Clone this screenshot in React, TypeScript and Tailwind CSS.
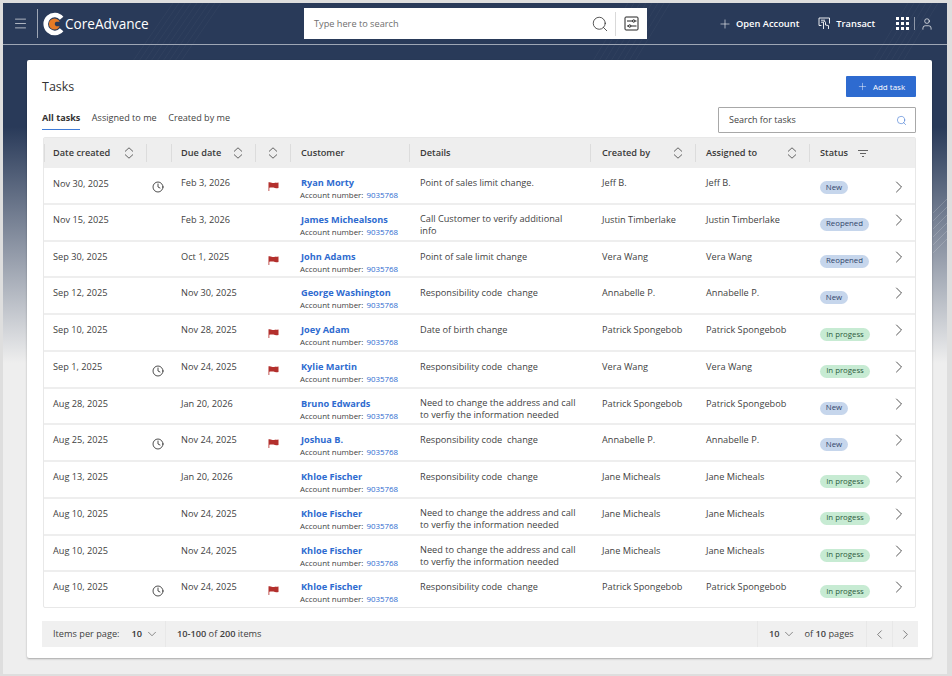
import React from 'react';
import { ChevronDown, ChevronLeft, ChevronRight, Clock, Menu, Plus, Search, User } from 'lucide-react';

type Task = {
  created: string;
  clock?: boolean;
  due: string;
  flag?: boolean;
  customer: string;
  details: string;
  by: string;
  to: string;
  status: 'New' | 'Reopened' | 'In progess';
};

const tasks: Task[] = [
  { created: 'Nov 30, 2025', clock: true, due: 'Feb 3, 2026', flag: true, customer: 'Ryan Morty', details: 'Point of sales limit change.', by: 'Jeff B.', to: 'Jeff B.', status: 'New' },
  { created: 'Nov 15, 2025', due: 'Feb 3, 2026', customer: 'James Michealsons', details: 'Call Customer to verify additional info', by: 'Justin Timberlake', to: 'Justin Timberlake', status: 'Reopened' },
  { created: 'Sep 30, 2025', due: 'Oct 1, 2025', flag: true, customer: 'John Adams', details: 'Point of sale limit change', by: 'Vera Wang', to: 'Vera Wang', status: 'Reopened' },
  { created: 'Sep 12, 2025', due: 'Nov 30, 2025', customer: 'George Washington', details: 'Responsibility code  change', by: 'Annabelle P.', to: 'Annabelle P.', status: 'New' },
  { created: 'Sep 10, 2025', due: 'Nov 28, 2025', flag: true, customer: 'Joey Adam', details: 'Date of birth change', by: 'Patrick Spongebob', to: 'Patrick Spongebob', status: 'In progess' },
  { created: 'Sep 1, 2025', clock: true, due: 'Nov 24, 2025', flag: true, customer: 'Kylie Martin', details: 'Responsibility code  change', by: 'Vera Wang', to: 'Vera Wang', status: 'In progess' },
  { created: 'Aug 28, 2025', due: 'Jan 20, 2026', customer: 'Bruno Edwards', details: 'Need to change the address and call to verfiy the information needed', by: 'Patrick Spongebob', to: 'Patrick Spongebob', status: 'New' },
  { created: 'Aug 25, 2025', clock: true, due: 'Nov 24, 2025', flag: true, customer: 'Joshua B.', details: 'Responsibility code  change', by: 'Annabelle P.', to: 'Annabelle P.', status: 'New' },
  { created: 'Aug 13, 2025', due: 'Jan 20, 2026', customer: 'Khloe Fischer', details: 'Responsibility code  change', by: 'Jane Micheals', to: 'Jane Micheals', status: 'In progess' },
  { created: 'Aug 10, 2025', due: 'Nov 24, 2025', customer: 'Khloe Fischer', details: 'Need to change the address and call to verfiy the information needed', by: 'Jane Micheals', to: 'Jane Micheals', status: 'In progess' },
  { created: 'Aug 10, 2025', due: 'Nov 24, 2025', customer: 'Khloe Fischer', details: 'Need to change the address and call to verfiy the information needed', by: 'Jane Micheals', to: 'Jane Micheals', status: 'In progess' },
  { created: 'Aug 10, 2025', clock: true, due: 'Nov 24, 2025', flag: true, customer: 'Khloe Fischer', details: 'Responsibility code  change', by: 'Patrick Spongebob', to: 'Patrick Spongebob', status: 'In progess' },
];

const columns = 'grid grid-cols-[102px_25px_84px_35px_119px_181px_105px_114px_1fr]';

const Logo = () => (
  <svg width="22" height="24" viewBox="0 0 22 24" className="shrink-0">
    <path d="M18.6 6.2A9 9 0 1 0 18.6 17.8" fill="none" stroke="#ffffff" strokeWidth="4.6" />
    <circle cx="11.5" cy="12" r="5.6" fill="#e57b26" />
    <path d="M17.5 9.8H13.2A2.4 2.4 0 0 0 13.2 14.2H17.5Z" fill="#293a59" />
  </svg>
);

const SortIcon = () => (
  <svg width="10" height="12" viewBox="0 0 10 12" fill="none" stroke="#3f3f3f" strokeWidth="0.8" className="shrink-0">
    <path d="M1 4.5 5 .8 9 4.5M1 7.5 5 11.2 9 7.5" />
  </svg>
);

const Flag = () => (
  <svg width="11" height="9" viewBox="0 0 11 9">
    <path d="M0.5 0.3 C3 -0.3 4 1.2 6 1 C7.5 0.9 8.5 0.9 10.5 0.6 L10.5 6 C8 6.6 7 6.2 5.5 5.6 C4 5.2 2.5 5.4 1.3 5.8 L1.3 9 L0.5 9 Z" fill="#b3302d" />
  </svg>
);

const SlidersIcon = () => (
  <svg width="15" height="15" viewBox="0 0 15 15" fill="none" stroke="#222222" strokeWidth="1">
    <rect x="1" y="1" width="13" height="13" rx="1" />
    <path d="M3 5h5.5M11 5h1.5M3 10h1.5M7 10h5.5" />
    <circle cx="9.7" cy="5" r="1.2" />
    <circle cx="5.7" cy="10" r="1.2" />
  </svg>
);

const TransactIcon = () => (
  <svg width="13" height="13" viewBox="0 0 13 13" fill="none" stroke="#ffffff" strokeWidth="0.9">
    <path d="M3.5 8.5H1V1h10.5v5.5" />
    <path d="M3 3.2h4M3 5.2h2.5" />
    <path d="M5.5 12V5.5a1 1 0 0 1 2 0V8l3 .6V12" />
  </svg>
);

const GridIcon = () => (
  <div className="grid grid-cols-3 gap-[2.5px]">
    {[1, 2, 3, 4, 5, 6, 7, 8, 9].map(dot => <span key={dot} className="size-[2.5px] bg-white"></span>)}
  </div>
);

const Divider = () => <span className="absolute left-0 top-[6px] bottom-[6px] w-px bg-[#dcdcdc]"></span>;

const HeaderCell = ({ label, sort, pad = 'pl-[11px]' }: { label?: string; sort?: boolean; pad?: string }) => (
  <div className={`relative flex items-center ${pad}`}>
    <Divider />
    {label && <span className="text-[#3a3a3a] font-semibold">{label}</span>}
    {sort && <SortIcon />}
  </div>
);

const StatusPill = ({ status }: { status: Task['status'] }) => {
  const color = status === 'In progess' ? 'bg-[#c7ebd3] text-[#2c5a3d] w-[50px]' : status === 'New' ? 'bg-[#c6d6ec] text-[#2f4468] w-[28px]' : 'bg-[#c6d6ec] text-[#2f4468] w-[49px]';
  return <span className={`${color} h-[13px] rounded-full flex items-center justify-center text-[7.8px] leading-none whitespace-nowrap`}>{status}</span>;
};

const App = () => {
  return (
    <div className="w-[952px] h-[676px] overflow-hidden bg-[#dedede] pt-[3px] pl-[3px] pr-[5px] pb-[2px] font-['Open_Sans',sans-serif] text-[#3f3f3f]">
      <div className="relative h-full bg-[linear-gradient(to_bottom,#293a59_124px,#eeeeee_360px)]">
        {/* background line pattern */}
        <svg className="absolute inset-x-0 top-0 w-full h-[330px]" viewBox="0 0 944 330" fill="none" stroke="#ffffff" strokeOpacity="0.05" strokeWidth="0.7">
          {[0, 6, 12, 18, 24, 30, 36, 42, 48].map(n => <path key={n} d={`M${130 + n} 58 L${170 + n} 0`} />)}
          {[0, 6, 12, 18, 24, 30, 36, 42].map(n => <path key={n} d={`M${590 + n} 58 L${625 + n} 0`} />)}
          {[0, 6, 12, 18, 24, 30].map(n => <path key={n} d={`M${870 + n} 58 L${905 + n} 0`} />)}
          {[0, 8, 16, 24, 32, 40].map(n => <path key={n} d={`M930 ${210 + n} L944 ${196 + n}`} strokeOpacity="0.25" />)}
        </svg>

        <header className="relative h-[42px] border-b border-[#9ea6b5] flex items-center text-white">
          <button className="w-[34px] flex justify-center pl-[1px]"><Menu size={15} strokeWidth={1} /></button>
          <span className="w-px h-[29px] bg-[#9ea6b5]"></span>
          <div className="ml-[5px] w-[261px] flex items-center">
            <Logo />
            <span className="text-[13.6px] leading-none">CoreAdvance</span>
          </div>
          <div className="w-[343px] h-[31px] bg-white flex items-center text-[#6e6e6e] text-[9.2px]">
            <span className="pl-[10px] flex-1">Type here to search</span>
            <Search size={18} strokeWidth={1} className="text-[#222222] mr-[6px]" />
            <span className="h-[24px] w-px bg-[#d9d9d9]"></span>
            <span className="w-[31px] flex justify-center"><SlidersIcon /></span>
          </div>
          <div className="ml-[71px] flex items-center gap-[4px] text-[9.3px] font-semibold whitespace-nowrap">
            <Plus size={14} strokeWidth={1} />
            <span>Open Account</span>
          </div>
          <div className="ml-[19px] flex items-center gap-[5px] text-[9.3px] font-semibold whitespace-nowrap">
            <TransactIcon />
            <span>Transact</span>
          </div>
          <div className="ml-[21px] flex items-center shrink-0">
            <GridIcon />
            <span className="mx-[5px] w-px h-[13px] bg-[#8e97a8]"></span>
            <User size={14} strokeWidth={1.2} />
          </div>
        </header>

        <main className="absolute left-[24px] right-[15px] top-[57px] h-[598px] bg-white rounded-[2px] shadow-[0_1px_2px_rgba(0,0,0,0.3)] px-[16px] pt-[16px]">
          <div className="flex justify-between items-start">
            <h1 className="text-[12.5px] leading-[20px] mt-px -ml-px font-normal text-[#333333]">Tasks</h1>
            <button className="w-[70px] h-[21px] bg-[#2e6bd0] rounded-[1px] text-white text-[8px] font-normal flex items-center justify-center gap-[5px]">
              <Plus size={11} strokeWidth={1} />
              Add task
            </button>
          </div>
          <div className="flex justify-between items-end mt-[10px] h-[26px]">
            <nav className="flex gap-[11.5px] text-[9.1px] self-start pt-[4px] -ml-px leading-[13px]">
              <span className="font-bold text-[#333333] border-b border-[#3d7ad6] h-[19px]">All tasks</span>
              <span>Assigned to me</span>
              <span>Created by me</span>
            </nav>
            <div className="w-[198px] h-[26px] border border-[#a8a8a8] rounded-[1px] flex items-center justify-between pl-[10px] pr-[8px] text-[9px] text-[#444444]">
              Search for tasks
              <Search size={11} strokeWidth={1.2} className="text-[#2e6bd0]" />
            </div>
          </div>

          <section className="mt-[4px] w-[873px] h-[471px] border border-[#e8e8e8] rounded-[2px] flex flex-col text-[9.2px]">
            <div className={`${columns} h-[30px] bg-[#eeeeee] shrink-0`}>
              <HeaderCell label="Date created" sort pad="pl-[9px] pr-[12px] justify-between" />
              <HeaderCell />
              <HeaderCell label="Due date" sort pad="pl-[10px] pr-[12px] justify-between" />
              <HeaderCell sort pad="justify-center" />
              <HeaderCell label="Customer" />
              <HeaderCell label="Details" />
              <HeaderCell label="Created by" sort pad="pl-[12px] pr-[12px] justify-between" />
              <HeaderCell label="Assigned to" sort pad="pl-[11px] pr-[12px] justify-between" />
              <div className="relative flex items-center pl-[11px] gap-[10px]">
                <Divider />
                <span className="text-[#3a3a3a] font-semibold">Status</span>
                <svg width="10" height="7" viewBox="0 0 10 7" stroke="#3f3f3f" strokeWidth="0.8"><path d="M0 .5h10M2 3.5h6M4 6.5h2" /></svg>
              </div>
            </div>
            <div className="flex-1 min-h-0 flex flex-col">
              {tasks.map((task, i) => (
                <div key={i} className={`${columns} flex-1 min-h-0 leading-[12px] ${i < tasks.length - 1 ? 'border-b-2 border-[#eeeeee]' : ''}`}>
                  <div className={`pl-[9px] ${i === 0 ? 'pt-[10px]' : 'pt-[9px]'}`}>{task.created}</div>
                  <div className="pl-[6px] pt-[13px]">{task.clock && <Clock size={12} strokeWidth={1.6} className="text-[#222222]" />}</div>
                  <div className="pl-[10px] pt-[9px]">{task.due}</div>
                  <div className="flex justify-center pl-[1px] pt-[14px]">{task.flag && <Flag />}</div>
                  <div className="pl-[11px] pt-[8px]">
                    <div className="text-[#2e6bd0] font-bold leading-[13px]">{task.customer}</div>
                    <div className="text-[7.9px] leading-[11px] mt-[1px] whitespace-nowrap -ml-[1px]">Account number: <span className="text-[#2e6bd0] ml-[1px]">9035768</span></div>
                  </div>
                  <div className={`pl-[11px] pr-[12px] ${task.details.length > 30 ? 'pt-[8px]' : 'pt-[9px]'}`}>{task.details.split('  ').join('\u00a0 ')}</div>
                  <div className="pl-[12px] pt-[9px]">{task.by}</div>
                  <div className="pl-[11px] pt-[9px]">{task.to}</div>
                  <div className="flex items-start justify-between pl-[11px] pr-[6px]">
                    <span className="pt-[13px]"><StatusPill status={task.status} /></span>
                    <ChevronRight size={20} strokeWidth={1} className={`text-[#333333] ${i === 0 ? 'mt-[9px]' : 'mt-[5px]'}`} />
                  </div>
                </div>
              ))}
            </div>
          </section>

          <footer className="-ml-px mt-[13px] w-[876px] h-[26px] bg-[#f0f0f0] flex items-center text-[9.2px]">
            <div className="w-[124px] h-full flex items-center pl-[11px] border-r border-[#e8e8e8]">
              <span>Items per page:</span>
              <span className="ml-[12px] text-[#333333] font-semibold">10</span>
              <ChevronDown size={14} strokeWidth={1} className="ml-[3px]" />
            </div>
            <div className="flex-1 pl-[11px]"><b className="font-semibold">10-100</b> of <b className="font-semibold">200</b> items</div>
            <div className="w-[109px] h-full flex items-center pl-[11px] border-l border-[#e8e8e8]">
              <span className="font-semibold">10</span>
              <ChevronDown size={14} strokeWidth={1} className="ml-[2px]" />
              <span className="ml-[9px]">of <b className="font-semibold">10</b> pages</span>
            </div>
            <div className="w-[26px] h-full flex items-center justify-center border-l border-[#e8e8e8]"><ChevronLeft size={15} strokeWidth={1} /></div>
            <div className="w-[26px] h-full flex items-center justify-center border-l border-[#e8e8e8]"><ChevronRight size={15} strokeWidth={1} /></div>
          </footer>
        </main>
      </div>
    </div>
  );
};

export default App;
